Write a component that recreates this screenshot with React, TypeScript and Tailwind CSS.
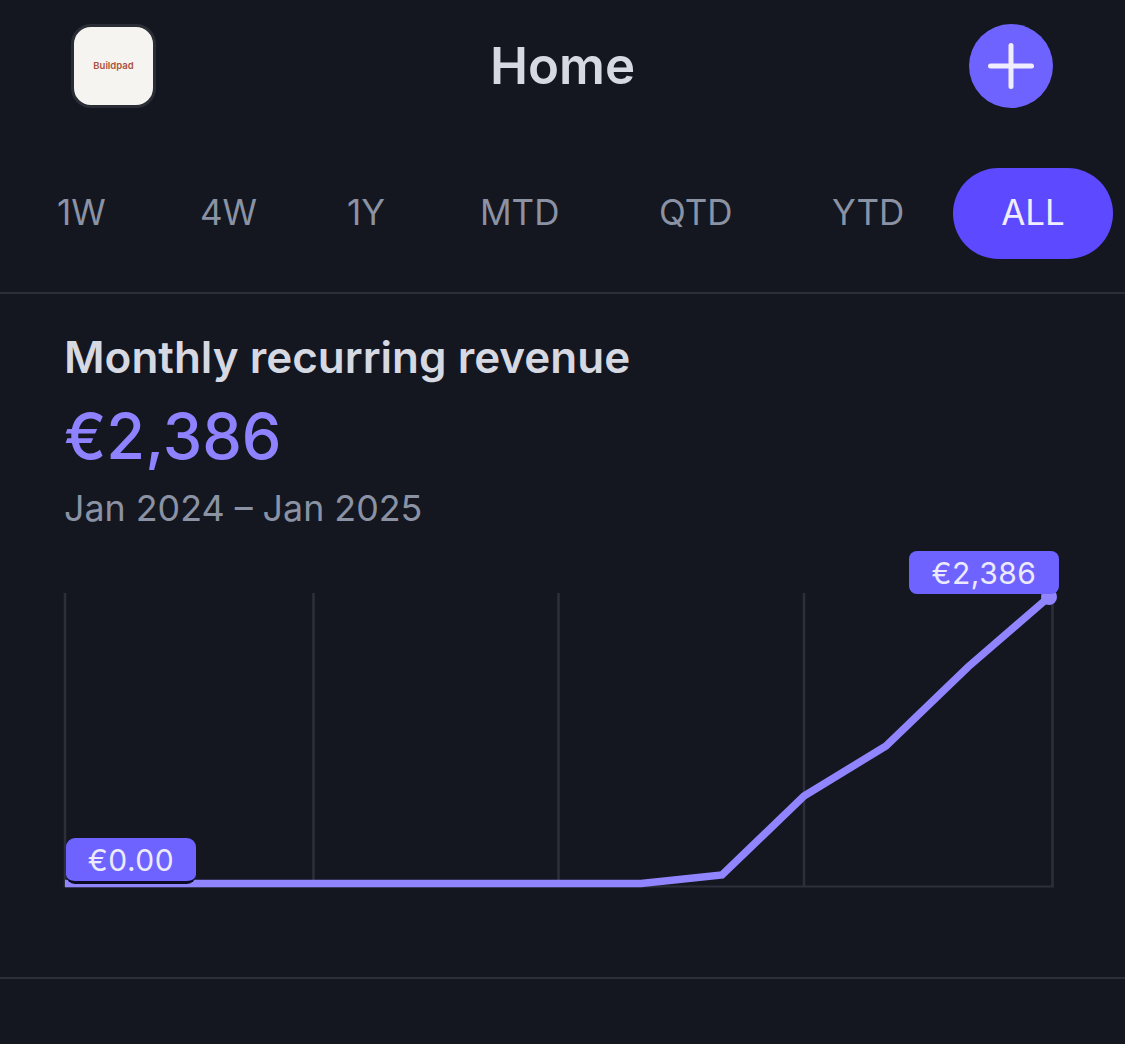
const tabs = ['1W', '4W', '1Y', 'MTD', 'QTD', 'YTD'];

function Chart() {
  return (
    <div className="relative mt-[20px] ml-[60px] h-[340px] w-[1000px]">
      <svg width="1000" height="340" viewBox="60 550 1000 340" fill="none" className="block">
        <g stroke="#2c2f39" strokeWidth="2.5">
          <path d="M65 593V887" />
          <path d="M313.5 593V887" />
          <path d="M558.5 593V887" />
          <path d="M804 593V887" />
          <path d="M1052.5 593V887" />
          <path d="M65 886.5H1054" strokeWidth="2" />
        </g>
        <path
          d="M65 883.5H641L722 875L804 796L886 746L968 667L1049 597"
          stroke="#9184ff"
          strokeWidth="7.5"
          strokeLinejoin="miter"
        />
        <circle cx="1049" cy="597" r="8" fill="#9184ff" />
      </svg>
      {/* value labels sit over the line */}
      <div className="absolute left-[849px] top-[1px] flex h-[43px] w-[150px] items-center justify-center rounded-[8px] bg-[#6f63ff] pt-[2px] text-[30px] tracking-[0.5px] text-[#eceafd]">
        €2,386
      </div>
      <div className="absolute left-[6px] top-[288px] flex h-[46px] w-[130px] items-center justify-center rounded-[9px] border-b-[3px] border-[#0c0b24] bg-[#6f63ff] pt-[2px] text-[30px] tracking-[0.5px] text-[#eceafd]">
        €0.00
      </div>
    </div>
  );
}

export default function App() {
  return (
    <div className="h-[1044px] w-[1125px] overflow-hidden bg-[#141720] font-['Inter',sans-serif]">
      <header className="flex items-center justify-between pl-[71px] pr-[72px] pt-[24px]">
        <div className="flex h-[84px] w-[85px] items-center justify-center rounded-[20px] border-[3px] border-[#2a2d36] bg-[#f5f4f0] text-[9.5px] font-semibold text-[#a8523f]">
          Buildpad
        </div>
        <h1 className="text-[51px] leading-[60px] font-semibold text-[#d6d8e2]">Home</h1>
        <button className="flex h-[84px] w-[84px] items-center justify-center rounded-full bg-[#6f63ff]">
          <svg width="48" height="48" viewBox="0 0 48 48" fill="none" stroke="#f0eefe" strokeWidth="5" strokeLinecap="round">
            <path d="M24 3.5V44.5" />
            <path d="M3.5 24H44.5" />
          </svg>
        </button>
      </header>

      <nav className="mt-[60px] grid h-[91px] grid-cols-[143px_147px_133px_179px_173px_121px_160px] items-center pl-[57px]">
        {tabs.map((tab) => (
          <span key={tab} className="pb-[2px] text-[35px] text-[#8a92a4]">
            {tab}
          </span>
        ))}
        <span className="flex h-[91px] items-center justify-center rounded-full bg-[#5d49ff] pb-[2px] text-[35px] text-[#f0eefe]">
          ALL
        </span>
      </nav>

      <section className="mt-[33px] h-[687px] border-y-2 border-[#2c2f39]">
        <div className="pl-[64px] pt-[35px]">
          <h2 className="text-[44px] leading-[56px] font-semibold text-[#d6d8e2]">Monthly recurring revenue</h2>
          <div className="mt-[15px] text-[63px] leading-[72px] font-medium text-[#8f82ff]">€2,386</div>
          <div className="mt-[14px] text-[35.8px] leading-[44px] text-[#8a92a4]">Jan 2024 – Jan 2025</div>
        </div>
        <Chart />
      </section>
    </div>
  );
}
